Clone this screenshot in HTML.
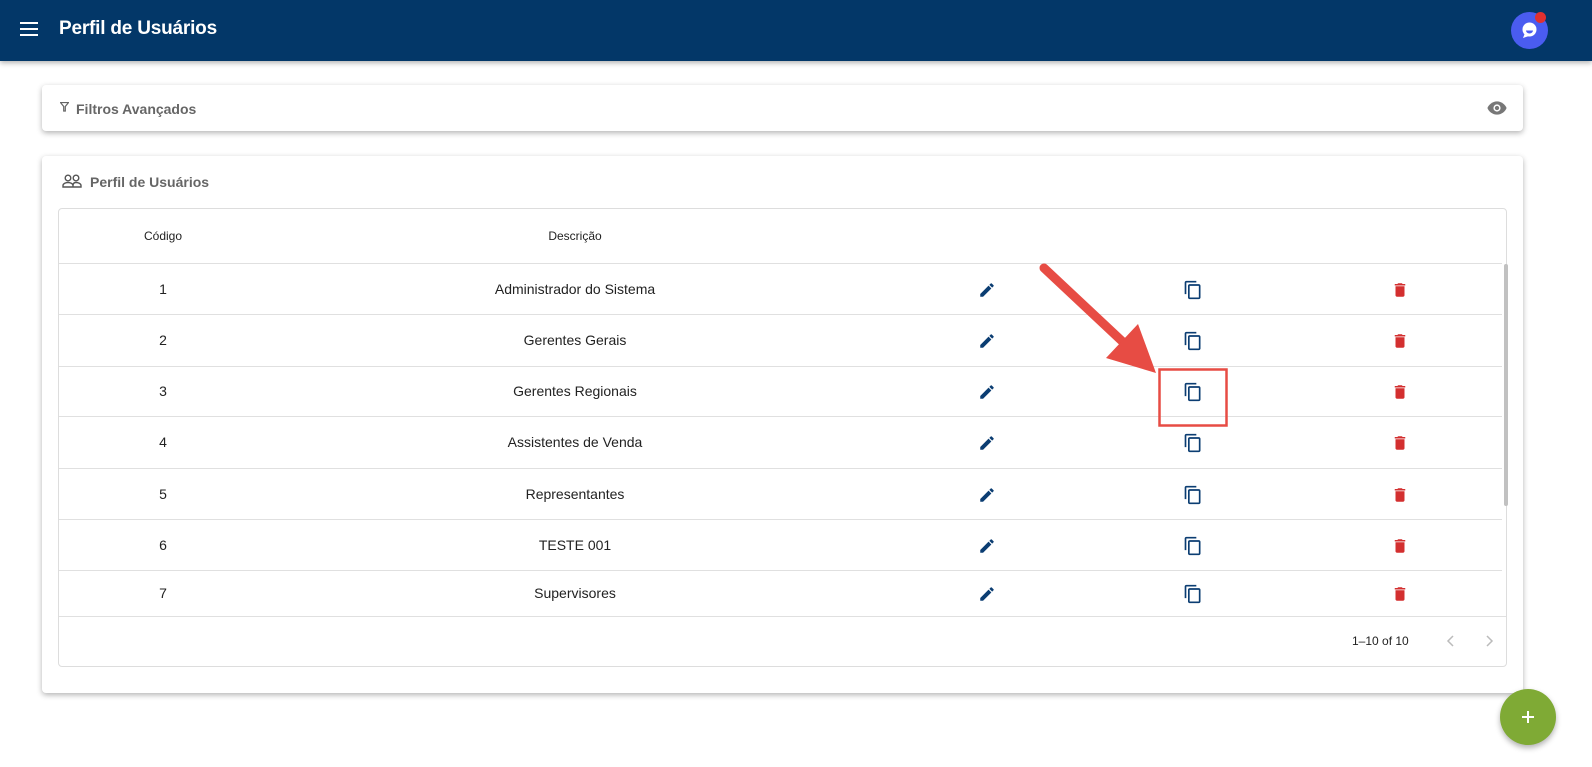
<!DOCTYPE html>
<html><head><meta charset="utf-8"><style>
*{box-sizing:border-box;margin:0;padding:0}
body{width:1592px;height:767px;background:#fff;font-family:"Liberation Sans",Arial,sans-serif;position:relative;overflow:hidden;color:#222}
.top{position:absolute;left:0;top:0;width:1592px;height:61px;background:#033768;box-shadow:0 2px 5px rgba(0,0,0,.3)}
.top .t{position:absolute;left:59px;top:18px;color:#fff;font-size:19px;font-weight:bold;letter-spacing:-0.2px}
.card{position:absolute;left:42px;width:1481px;background:#fff;border-radius:4px;box-shadow:0 2px 6px rgba(0,0,0,.3)}
.lbl{position:absolute;font-size:14px;font-weight:bold;color:#666}
.tbl{position:absolute;left:16px;top:52px;width:1449px;height:459px;border:1px solid #ddd;border-radius:4px}
.row{position:absolute;left:0;width:1443px;border-top:1px solid #e0e0e0;font-size:14px}
.c{position:absolute;transform:translateX(-50%);white-space:nowrap}
.ic{position:absolute}
</style></head><body>
<div class="top">
<svg style="position:absolute;left:20px;top:22px" width="18" height="14"><rect y="0" width="18" height="2" fill="#fff"/><rect y="6" width="18" height="2" fill="#fff"/><rect y="12" width="18" height="2" fill="#fff"/></svg>
<div class="t">Perfil de Usuários</div>
<div style="position:absolute;left:1511px;top:12px;width:37px;height:37px;border-radius:50%;background:#4a5cf0"></div>
<svg style="position:absolute;left:1519px;top:20px" width="20" height="20" viewBox="0 0 20 20"><circle cx="10.5" cy="9.5" r="7" fill="#fff"/><path d="M4 18l2-5 4 3z" fill="#fff"/><path d="M7 10.5h7a3.5 3 0 0 1-7 0z" fill="#4a5cf0"/></svg>
<div style="position:absolute;left:1535px;top:12px;width:11px;height:11px;border-radius:50%;background:#e0302f"></div>
</div>
<div class="card" style="top:85px;height:46px">
<svg style="position:absolute;left:18px;top:17px" width="9" height="10" viewBox="0 0 9 10"><path d="M0.5 0.5h8L5.3 4.5V9H3.7V4.5z" fill="none" stroke="#666" stroke-width="1.2"/></svg>
<div class="lbl" style="left:34px;top:16px">Filtros Avançados</div>
<svg style="position:absolute;left:1445px;top:15px" width="20" height="16" viewBox="0 0 24 18"><path d="M12 1C6.5 1 2 5 0.5 9 2 13 6.5 17 12 17s10-4 11.5-8C22 5 17.5 1 12 1z" fill="#777"/><circle cx="12" cy="9" r="4.3" fill="#fff"/><circle cx="12" cy="9" r="2.6" fill="#777"/></svg>
</div>
<div class="card" style="top:156px;height:537px">
<svg style="position:absolute;left:20px;top:18px" width="20" height="14" viewBox="0 0 20 14"><circle cx="6" cy="4" r="2.8" fill="none" stroke="#555" stroke-width="1.4"/><circle cx="14" cy="4" r="2.8" fill="none" stroke="#555" stroke-width="1.4"/><path d="M1 13v-1.5c0-2 3-3 5-3s5 1 5 3V13zM11 13v-1.5c0-2 1-3 3-3s5 1 5 3V13z" fill="none" stroke="#555" stroke-width="1.4"/></svg>
<div class="lbl" style="left:48px;top:18px">Perfil de Usuários</div>
<div class="tbl">
<div class="c" style="left:104px;top:20px;font-size:12px">Código</div>
<div class="c" style="left:516px;top:20px;font-size:12px">Descrição</div>
<div style="position:absolute;left:1445px;top:55px;width:4px;height:242px;background:#c1c1c1;border-radius:2px"></div>
<div id="rows"></div>
<div style="position:absolute;left:0;top:407px;width:1447px;border-top:1px solid #e0e0e0"></div>
<div style="position:absolute;left:1293px;top:425px;font-size:12px">1–10 of 10</div>
<svg style="position:absolute;left:1387px;top:425px" width="10" height="14"><path d="M7 2L2 7l5 5" fill="none" stroke="#bbb" stroke-width="1.5"/></svg>
<svg style="position:absolute;left:1425px;top:425px" width="10" height="14"><path d="M3 2l5 5-5 5" fill="none" stroke="#bbb" stroke-width="1.5"/></svg>
</div>
</div>
<div style="position:absolute;left:1500px;top:689px;width:56px;height:56px;border-radius:50%;background:#7faa35;box-shadow:0 3px 6px rgba(0,0,0,.3)"></div>
<svg style="position:absolute;left:1521px;top:710px" width="14" height="14"><path d="M7 1v12M1 7h12" stroke="#fff" stroke-width="2"/></svg>
<svg style="position:absolute;left:0;top:0" width="1592" height="767">
<line x1="1044" y1="268" x2="1124" y2="343" stroke="#e74c44" stroke-width="9" stroke-linecap="round"/>
<polygon points="1156,373 1106,358 1138,324" fill="#e74c44"/>
<rect x="1159.5" y="369.5" width="67" height="56" fill="none" stroke="#e74c44" stroke-width="2.5"/>
</svg>
<script>
var d=[["1","Administrador do Sistema"],["2","Gerentes Gerais"],["3","Gerentes Regionais"],["4","Assistentes de Venda"],["5","Representantes"],["6","TESTE 001"],["7","Supervisores"]];
var tops=[54,105,157,207,259,310,361],h="";
d.forEach(function(r,i){var ht=(i<6?tops[i+1]:407)-tops[i];var cy=ht/2;
h+='<div class="row" style="top:'+tops[i]+'px;height:'+ht+'px"><div class="c" style="left:104px;top:'+(cy-9)+'px">'+r[0]+'</div><div class="c" style="left:516px;top:'+(cy-9)+'px">'+r[1]+'</div>'+
'<svg class="ic" style="left:919px;top:'+(cy-9)+'px" width="18" height="18" viewBox="0 0 24 24"><path d="M3 17.25V21h3.75L17.81 9.94l-3.75-3.75L3 17.25zM20.71 7.04a1 1 0 0 0 0-1.41l-2.34-2.34a1 1 0 0 0-1.41 0l-1.83 1.83 3.75 3.75 1.83-1.83z" fill="#0b3d72"/></svg>'+
'<svg class="ic" style="left:1124px;top:'+(cy-10)+'px" width="20" height="20" viewBox="0 0 24 24"><path d="M16 1H4c-1.1 0-2 .9-2 2v14h2V3h12V1zm3 4H8c-1.1 0-2 .9-2 2v14c0 1.1.9 2 2 2h11c1.1 0 2-.9 2-2V7c0-1.1-.9-2-2-2zm0 16H8V7h11v14z" fill="#0b3d72"/></svg>'+
'<svg class="ic" style="left:1332px;top:'+(cy-9)+'px" width="18" height="18" viewBox="0 0 24 24"><path d="M6 19c0 1.1.9 2 2 2h8c1.1 0 2-.9 2-2V7H6v12zM19 4h-3.5l-1-1h-5l-1 1H5v2h14V4z" fill="#d32f2f"/></svg></div>';});
document.getElementById("rows").innerHTML=h;
</script>
</body></html>
